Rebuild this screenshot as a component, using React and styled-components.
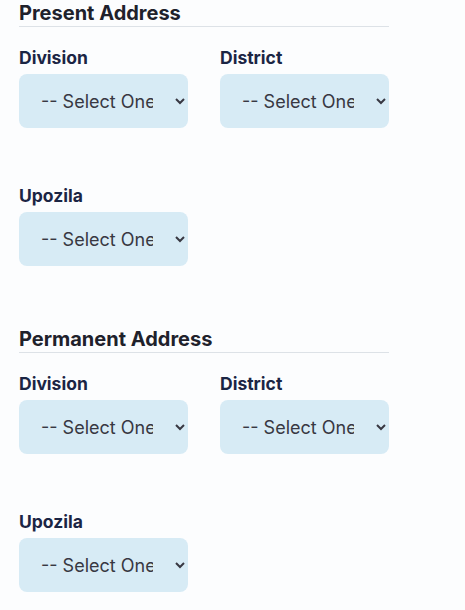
import styled, { createGlobalStyle } from "styled-components";

const GlobalStyle = createGlobalStyle`
    body {
        margin: 0;
        background: #fcfdfe;
        font-family: Inter, "Noto Sans", sans-serif;
    }
`;

const Page = styled.div`
    padding: 0 0 0 19px;
    width: 370px;
`;

const Section = styled.section`
    margin-bottom: 60px;
`;

const Heading = styled.h2`
    margin: 0;
    font-size: 20px;
    line-height: 26px;
    font-weight: 700;
    color: #20212b;
    border-bottom: 1px solid #dde2e7;
`;

const Grid = styled.div`
    display: grid;
    grid-template-columns: 169px 169px;
    column-gap: 32px;
    row-gap: 58px;
    margin-top: 21px;
`;

const Field = styled.div`
    display: flex;
    flex-direction: column;
`;

const Label = styled.label`
    font-size: 17.5px;
    font-weight: 700;
    line-height: 20px;
    color: #1b2544;
    margin-bottom: 6px;
`;

const Select = styled.select`
    width: 169px;
    height: 54px;
    border: none;
    border-radius: 8px;
    background: #d7ebf5;
    color: #383842;
    font-family: Inter, "Noto Sans", sans-serif;
    font-size: 18px;
    padding: 0 19px 0 18px;
    outline: none;
`;

function Dropdown({ label }) {
    return (
        <Field>
            <Label>{label}</Label>
            <Select defaultValue="">
                <option value="">-- Select One --</option>
            </Select>
        </Field>
    );
}

function AddressBlock({ title }) {
    return (
        <Section>
            <Heading>{title}</Heading>
            <Grid>
                <Dropdown label="Division" />
                <Dropdown label="District" />
                <Dropdown label="Upozila" />
            </Grid>
        </Section>
    );
}

export default function App() {
    return (
        <>
            <GlobalStyle />
            <Page>
                <AddressBlock title="Present Address" />
                <AddressBlock title="Permanent Address" />
            </Page>
        </>
    );
}
